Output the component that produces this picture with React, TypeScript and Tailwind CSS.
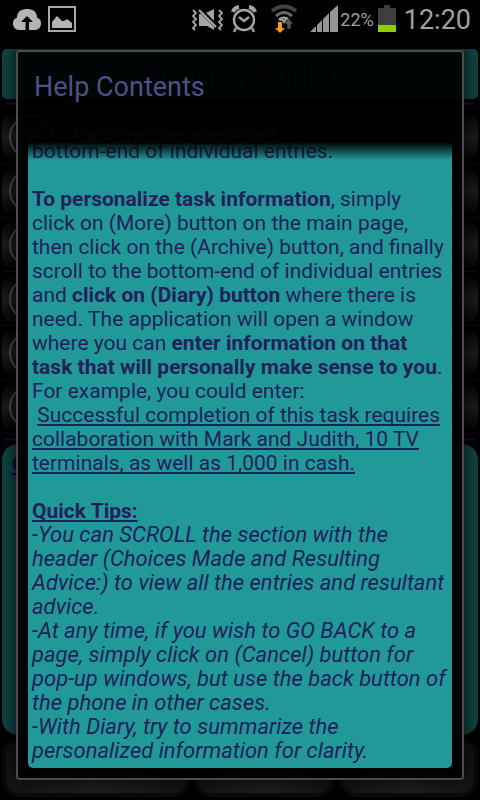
import type { ReactNode } from "react";

const rows = [
  { id: 1, label: "Rate impact expected" },
  { id: 2, label: "" },
  { id: 3, label: "" },
  { id: 4, label: "" },
  { id: 5, label: "" },
  { id: 6, label: "" },
];

function StatusBar() {
  return (
    <header className="flex h-10 items-center pr-[9px] pl-3 text-[#a0a0a0]">
      <svg className="h-8 w-[30px]" viewBox="0 0 30 32" fill="#b4b4b2">
        <path d="M7 26a6.500 6.500 0 0 1-2-12.500C5 7 10 5 15 5s10 2 10 8.500A6.500 6.500 0 0 1 23 26h-6v-8h4l-6-6-6 6h4.500v8z" />
      </svg>
      <svg className="ml-[6px] h-8 w-7" viewBox="0 0 28 32">
        <rect x="1" y="3" width="26" height="24" fill="none" stroke="#a8a8a8" strokeWidth="2" />
        <path d="M4 24v-6l5-6 5 5h2l3-2 5 4v5z" fill="#b4b4b2" />
      </svg>

      <div className="ml-auto flex items-center">
        <svg className="h-8 w-8" viewBox="0 0 32 32" fill="none" stroke="#a4a4a2">
          <path
            d="M1 6l3 3-3 3 3 3-3 3 3 3-3 3 2 2M27 6l3 3-3 3 3 3-3 3 3 3-3 3 2 2"
            strokeWidth="1.800"
          />
          <path d="M7 10h3l12 12v4l-7-4H7zM14 9l8-4v12z" fill="#a4a4a2" stroke="none" />
          <path d="M8 6l17 17" stroke="#000" strokeWidth="4" />
          <path d="M7 6l17 17" strokeWidth="2.400" />
        </svg>
        <svg className="ml-[6px] h-8 w-7" viewBox="0 0 28 32" fill="none" stroke="#a4a4a2">
          <circle cx="14" cy="16" r="10" strokeWidth="2.400" />
          <path d="M3 8q1-4 6-5M19 3q5 1 6 5" strokeWidth="4" />
          <path d="M9 13l5 4 5-4M6 24l-2 4M22 24l2 4" strokeWidth="2.400" />
        </svg>
        <svg className="ml-3 h-8 w-7" viewBox="0 0 28 32" fill="none">
          <path d="M2 7Q14-2 26 7" stroke="#444" strokeWidth="4" />
          <path d="M6 12q8-7 16 0" stroke="#666" strokeWidth="3" />
          <path d="M9 16q5-4 10 0" stroke="#999" strokeWidth="3" />
          <path d="M11 16h6l-3 4z" fill="#999" />
          <path d="M8 18h4v6h3l-5 5-5-5h3z" fill="#f59a23" />
          <path d="M17 25v-5h-3l5-6 4 6h-2v5z" fill="#555" stroke="#000" strokeWidth="0.500" />
        </svg>
        <svg className="ml-3 h-8 w-7" viewBox="0 0 28 32" fill="#969696">
          <path d="M0 28l6-6v6zM7 21l5-5v12H7zM13 15l6-6v19h-6zM20 8l8-7v27h-8z" />
        </svg>
        <span className="ml-0.5 text-[18px] leading-6">22%</span>
        <svg className="ml-1 h-8 w-[18px]" viewBox="0 0 18 32">
          <path d="M6 1h6v3h6v24H0V4h6z" fill="#3e3e3e" />
          <path d="M0 21h18v7H0z" fill="#92cc00" />
        </svg>
        <span className="ml-2 text-[27px] leading-8">12:20</span>
      </div>
    </header>
  );
}

function MenuRow({ label }: { label: string }) {
  return (
    <div className="h-[54px] border-b border-[#0e0e0e]">
      <div className="flex h-full items-center gap-5 rounded-2xl bg-[linear-gradient(#000,#1c1c1c_50%,#020202)] pl-[7px]">
        <svg className="h-11 w-11" viewBox="0 0 44 44" fill="none">
          <circle cx="22" cy="22" r="21" stroke="#4c4c4c" strokeWidth="2" />
          <path d="M14 19h16l-8 7z" fill="#333" />
        </svg>
        <span className="pt-[3px] text-[21px] font-medium text-[#1d5048]">{label}</span>
      </div>
    </div>
  );
}

function PageButton({ children }: { children?: ReactNode }) {
  return (
    <button className="h-[60px] rounded-[18px] border-4 border-[#0a0a0a] bg-[radial-gradient(at_50%_80%,#202020,#0f0f0f)] px-10 pt-2 text-left text-[21px] text-[#1d5048]">
      {children}
    </button>
  );
}

function HelpDialog() {
  return (
    <section
      role="dialog"
      aria-labelledby="help-title"
      className="absolute inset-x-4 top-[10px] rounded-sm border-2 border-[#4c4c4c] bg-black/92 px-[10px] pb-[10px] shadow-[0_0_14px_2px_rgba(0,0,0,0.7)]"
    >
      <h2 id="help-title" className="h-[90px] pt-[19px] pl-[6px] text-[27px] leading-8 text-[#514f86]">
        Help Contents
      </h2>
      <div className="relative overflow-hidden rounded-b-[5px] bg-[#219999] px-1 pb-[5px] text-[21px] leading-6 text-[#21215a] [text-decoration-skip-ink:none]">
        <div className="-mt-[3px]">
          <p>bottom-end of individual entries.</p>
          <p className="mt-6">
            <b>To personalize task information</b>, simply click on (More) button on the main page,
            then click on the (Archive) button, and finally scroll to the bottom-end of individual
            entries and <b>click on (Diary) button</b> where there is need. The application will
            open a window where you can{" "}
            <b>enter information on that task that will personally make sense to you</b>. For
            example, you could enter:
            <br />
            &nbsp;
            <u>
              Successful completion of this task requires collaboration with Mark and Judith, 10 TV
              terminals, as well as 1,000 in cash.
            </u>
          </p>
          <h3 className="mt-6 font-bold underline">Quick Tips:</h3>
          <div className="text-[22px] leading-6 italic">
            <p>
              -You can SCROLL the section with the
              <br />
              header (Choices Made and Resulting
              <br />
              Advice:) to view all the entries and resultant advice.
            </p>
            <p>
              -At any time, if you wish to GO BACK to a page, simply click on (Cancel) button for
              <br />
              pop-up windows, but use the back button of
              <br />
              the phone in other cases.
            </p>
            <p>
              -With Diary, try to summarize the
              <br />
              personalized information for clarity.
            </p>
          </div>
        </div>
        {/* scroll fade at the top edge */}
        <div className="absolute inset-x-0 top-0 h-[18px] bg-linear-to-b from-black to-transparent" />
      </div>
    </section>
  );
}

export default function App() {
  return (
    <div className="flex min-h-screen flex-col bg-black font-[Roboto,sans-serif]">
      <StatusBar />
      <main className="relative flex flex-1 flex-col px-0.5 pt-[9px] pb-[3px]">
        <h1 className="h-[50px] rounded-[5px] bg-[#104343] pt-[13px] text-center text-[27px] leading-8 text-black">
          Decision Guider
        </h1>
        <hr className="mx-[3px] mt-[3px] mb-[5px] h-[3px] border-0 bg-[#0c0c24]" />
        {rows.map((row) => (
          <MenuRow key={row.id} label={row.label} />
        ))}
        <hr className="mx-[3px] mt-1 mb-[3px] h-[3px] border-0 bg-[#0c0c24]" />
        <div className="flex-1 rounded-2xl bg-[#104343] px-[10px] pt-2">
          <h2 className="text-[21px] leading-6 font-bold text-[#0d0d30] underline">Cl</h2>
        </div>
        <div className="mt-0.5 grid grid-cols-[190fr_142fr_140fr] gap-1">
          <PageButton>Ge</PageButton>
          <PageButton />
          <PageButton>More</PageButton>
        </div>
        <HelpDialog />
      </main>
    </div>
  );
}
